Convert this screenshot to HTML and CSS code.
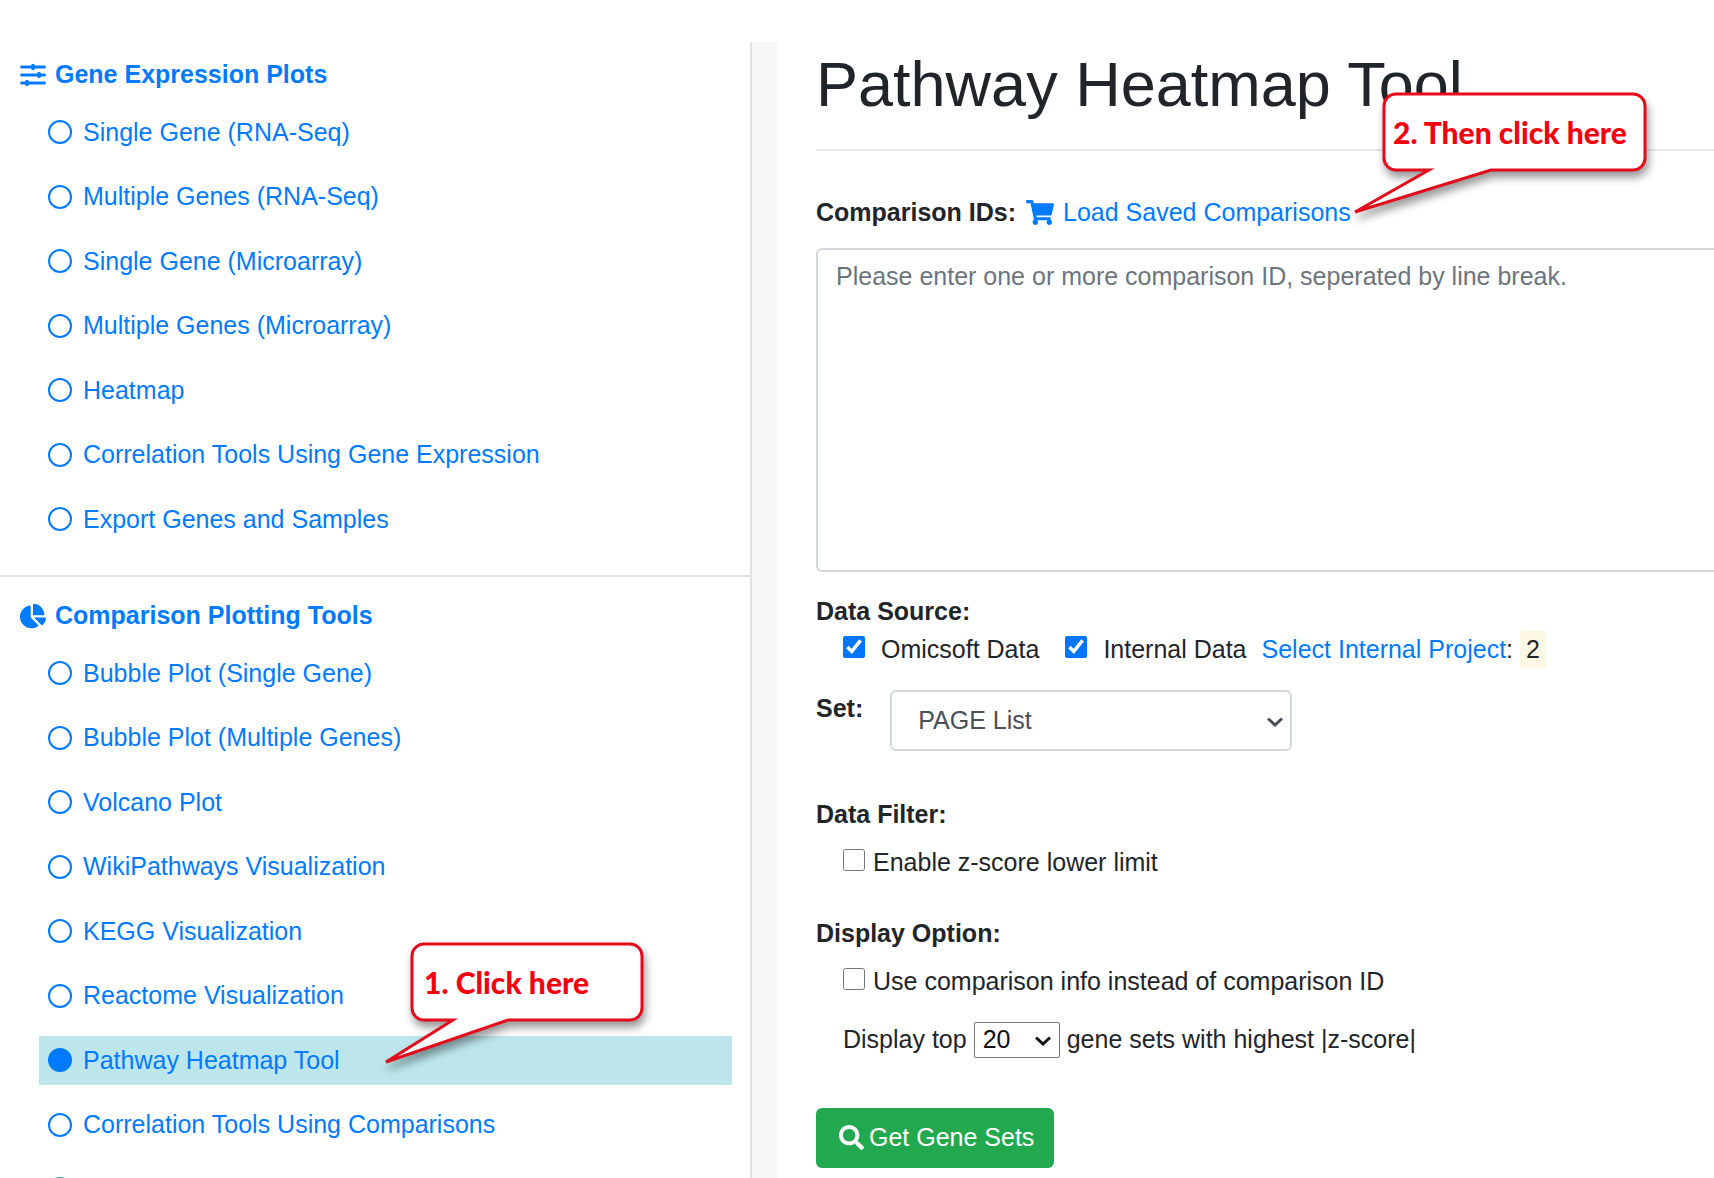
FILE: index.html
```html
<!DOCTYPE html>
<html lang="en">
<head>
<meta charset="utf-8">
<title>Pathway Heatmap Tool</title>
<link rel="stylesheet" href="styles.css">
</head>
<body>
<div class="page">
  <nav class="sidebar">
    <section class="group">
      <h2 class="group-title">
        <svg class="group-icon" viewBox="0 0 26 24" aria-hidden="true"><path d="M1.500 4H24.500M1.500 12H24.500M1.500 20H24.500" stroke="currentColor" stroke-width="2.800" stroke-linecap="round"/><path d="M13 2.500V5.500M19 10.500V13.500M7 18.500V21.500" stroke="currentColor" stroke-width="3.600" stroke-linecap="round"/></svg>
        Gene Expression Plots
      </h2>
      <ul class="tools">
        <li><a class="tool" href="#"><span class="dot"></span>Single Gene (RNA-Seq)</a></li>
        <li><a class="tool" href="#"><span class="dot"></span>Multiple Genes (RNA-Seq)</a></li>
        <li><a class="tool" href="#"><span class="dot"></span>Single Gene (Microarray)</a></li>
        <li><a class="tool" href="#"><span class="dot"></span>Multiple Genes (Microarray)</a></li>
        <li><a class="tool" href="#"><span class="dot"></span>Heatmap</a></li>
        <li><a class="tool" href="#"><span class="dot"></span>Correlation Tools Using Gene Expression</a></li>
        <li><a class="tool" href="#"><span class="dot"></span>Export Genes and Samples</a></li>
      </ul>
    </section>
    <section class="group">
      <h2 class="group-title">
        <svg class="group-icon" viewBox="0 0 544 512" aria-hidden="true"><path fill="currentColor" d="M527.79 288H290.5l158.03 158.03c6.04 6.04 15.98 6.53 22.19.68 38.7-36.46 65.32-85.61 73.13-140.86 1.34-9.46-6.51-17.85-16.06-17.85zm-15.83-64.8C503.72 103.74 408.26 8.28 288.8.04 279.68-.59 272 7.1 272 16.24V240h223.77c9.14 0 16.82-7.68 16.19-16.8zM224 288V50.71c0-9.55-8.39-17.4-17.84-16.06C86.99 51.49-4.1 155.6.14 280.37 4.5 408.51 114.83 513.59 243.03 511.98c50.4-.63 96.97-16.87 135.26-44.03 7.9-5.6 8.42-17.23 1.57-24.08L224 288z"/></svg>
        Comparison Plotting Tools
      </h2>
      <ul class="tools">
        <li><a class="tool" href="#"><span class="dot"></span>Bubble Plot (Single Gene)</a></li>
        <li><a class="tool" href="#"><span class="dot"></span>Bubble Plot (Multiple Genes)</a></li>
        <li><a class="tool" href="#"><span class="dot"></span>Volcano Plot</a></li>
        <li><a class="tool" href="#"><span class="dot"></span>WikiPathways Visualization</a></li>
        <li><a class="tool" href="#"><span class="dot"></span>KEGG Visualization</a></li>
        <li><a class="tool" href="#"><span class="dot"></span>Reactome Visualization</a></li>
        <li class="current">
          <a class="tool tool-active" href="#"><span class="dot"></span>Pathway Heatmap Tool</a>
          <div class="callout callout-first">
            <svg class="bubble" width="262" height="124" viewBox="0 0 262 124" aria-hidden="true"><path d="M40 2H246a12 12 0 0 1 12 12V66a12 12 0 0 1 -12 12H124L2 120L69 78H40a12 12 0 0 1 -12 -12V14a12 12 0 0 1 12 -12z"/></svg>
            <span class="callout-text">1. Click here</span>
          </div>
        </li>
        <li><a class="tool" href="#"><span class="dot"></span>Correlation Tools Using Comparisons</a></li>
        <li><span class="tool tool-next"><span class="dot"></span></span></li>
      </ul>
    </section>
  </nav>

  <main class="content">
    <h1 class="title">Pathway Heatmap Tool</h1>
    <form class="form">
      <div class="ids-row">
        <label class="label" for="ids">Comparison IDs:</label>
        <a class="link load-link" href="#"><svg class="cart" viewBox="0 0 576 512" aria-hidden="true"><path fill="currentColor" d="M528.12 301.319l47.273-208C578.806 78.301 567.391 64 551.99 64H159.208l-9.166-44.81C147.758 8.021 137.93 0 126.529 0H24C10.745 0 0 10.745 0 24v16c0 13.255 10.745 24 24 24h69.883l70.248 343.435C147.325 417.1 136 435.222 136 456c0 30.928 25.072 56 56 56s56-25.072 56-56c0-15.674-6.447-29.835-16.824-40h209.647C430.447 426.165 424 440.326 424 456c0 30.928 25.072 56 56 56s56-25.072 56-56c0-22.172-12.888-41.332-31.579-50.405l5.517-24.276c3.413-15.018-8.002-29.319-23.403-29.319H218.117l-6.545-32h293.145c11.206 0 20.92-7.754 23.403-18.681z"/></svg>Load Saved Comparisons</a>
        <div class="callout callout-second">
          <svg class="bubble" width="296" height="124" viewBox="0 0 296 124" aria-hidden="true"><path d="M43 2H280a12 12 0 0 1 12 12V66a12 12 0 0 1 -12 12H138L2 120L76 78H43a12 12 0 0 1 -12 -12V14a12 12 0 0 1 12 -12z"/></svg>
          <span class="callout-text">2. Then click here</span>
        </div>
      </div>
      <textarea class="ids" id="ids" placeholder="Please enter one or more comparison ID, seperated by line break."></textarea>

      <div class="label source-title">Data Source:</div>
      <div class="source-row">
        <label class="source"><input class="check" type="checkbox" checked>Omicsoft Data</label>
        <label class="source"><input class="check" type="checkbox" checked>Internal Data</label>
        <span class="project"><a class="link" href="#">Select Internal Project</a>: <span class="count">2</span></span>
      </div>

      <div class="set-row">
        <label class="label" for="set">Set:</label>
        <span class="select-wrap">
          <select class="set-select" id="set"><option>PAGE List</option></select>
          <svg class="chevron" viewBox="0 0 16 10" aria-hidden="true"><path d="M1 1.500L8 8L15 1.500"/></svg>
        </span>
      </div>

      <div class="label filter-title">Data Filter:</div>
      <label class="option"><input class="check" type="checkbox">Enable z-score lower limit</label>

      <div class="label display-title">Display Option:</div>
      <label class="option"><input class="check" type="checkbox">Use comparison info instead of comparison ID</label>

      <div class="top-row">
        <label for="top">Display top</label>
        <span class="select-wrap">
          <select class="top-select" id="top"><option>20</option></select>
          <svg class="chevron chevron-dark" viewBox="0 0 16 10" aria-hidden="true"><path d="M1 1.500L8 8L15 1.500"/></svg>
        </span>
        <span>gene sets with highest |z-score|</span>
      </div>

      <button class="submit" type="button"><svg class="search" viewBox="0 0 512 512" aria-hidden="true"><path fill="currentColor" d="M505 442.7L405.3 343c-4.5-4.5-10.6-7-17-7H372c27.6-35.3 44-79.7 44-128C416 93.1 322.9 0 208 0S0 93.1 0 208s93.1 208 208 208c48.3 0 92.7-16.4 128-44v16.3c0 6.4 2.5 12.5 7 17l99.7 99.7c9.4 9.4 24.6 9.4 33.9 0l28.3-28.3c9.4-9.4 9.4-24.6.1-34zM208 336c-70.7 0-128-57.2-128-128 0-70.7 57.2-128 128-128 70.7 0 128 57.2 128 128 0 70.7-57.2 128-128 128z"/></svg>Get Gene Sets</button>
    </form>
  </main>
</div>
</body>
</html>
```
FILE: styles.css
```css
* {
  box-sizing: border-box;
}

body {
  margin: 0;
  background: #fff;
  color: #212529;
  font-family: "Liberation Sans", Arial, sans-serif;
  font-size: 25px;
  line-height: 1.5;
}

.page {
  display: flex;
  height: 100vh;
  padding-top: 42px;
  overflow: hidden;
}

/* Sidebar */
.sidebar {
  flex: 0 0 752px;
  border-right: 2px solid #e0e1e2;
}

.group {
  padding: 14px 18px 31px 20px;
}

.group + .group {
  padding-top: 20px;
  border-top: 2px solid #dee0e2;
}

.group-title {
  display: flex;
  align-items: center;
  gap: 9px;
  margin: 0 0 14px;
  color: #007bff;
  font-size: 25px;
  font-weight: 700;
}

.group-icon {
  width: 26px;
  height: 26px;
}

.tools {
  display: flex;
  flex-direction: column;
  gap: 15px;
  margin: 0;
  padding: 0 0 0 19px;
  list-style: none;
}

.tool {
  display: flex;
  align-items: center;
  gap: 11px;
  padding: 6px 9px;
  color: #007bff;
  text-decoration: none;
}

.tool-active {
  background: #bce6eb;
}

.dot {
  width: 24px;
  height: 24px;
  border: 2px solid #007bff;
  border-radius: 50%;
}

.tool-active .dot {
  background: #007bff;
}

.tool-next {
  padding: 12px 9px;
}

.tool-next .dot {
  border-color: #1f9bb0;
}

.current {
  position: relative;
}

/* Main column */
.content {
  flex: 1;
  min-width: 0;
  padding: 5px 0 0 39px;
  border-left: 25px solid #f6f6f6;
}

.title {
  margin: 0;
  padding-bottom: 26px;
  border-bottom: 2px solid #e8e8e9;
  font-size: 63px;
  font-weight: 400;
  line-height: 1.2;
}

.form {
  padding-top: 43px;
}

.label {
  font-weight: 700;
}

.link {
  color: #007bff;
  text-decoration: none;
}

.ids-row {
  position: relative;
  display: flex;
  align-items: center;
  gap: 10px;
}

.load-link {
  display: flex;
  align-items: center;
  gap: 9px;
}

.cart {
  width: 28px;
  height: 25px;
}

.ids {
  display: block;
  width: 100%;
  height: 324px;
  margin-top: 17px;
  padding: 8px 18px;
  border: 2px solid #d3d8dd;
  border-right: 0;
  border-radius: 6px 0 0 6px;
  outline: 0;
  resize: none;
  font: inherit;
}

.ids::placeholder {
  color: #6c757d;
}

.source-title {
  margin-top: 21px;
}

.source-row {
  display: flex;
  align-items: baseline;
  padding-left: 27px;
}

.source {
  display: flex;
  align-items: baseline;
  gap: 16px;
  margin-right: 26px;
}

.source + .source {
  margin-right: 15px;
}

.check {
  width: 22px;
  height: 22px;
  margin: 0 0 1px;
  accent-color: #0075ff;
}

.count {
  display: inline-block;
  padding: 0 6px;
  background: #fcf8e3;
}

.set-row {
  display: flex;
  align-items: flex-start;
  gap: 27px;
  margin-top: 22px;
}

.select-wrap {
  position: relative;
  display: flex;
}

.set-select,
.top-select {
  appearance: none;
  background: #fff;
  font: inherit;
}

.set-select {
  width: 402px;
  height: 61px;
  padding: 0 26px;
  border: 2px solid #d3d8dd;
  border-radius: 6px;
  color: #495057;
}

.top-select {
  width: 86px;
  height: 36px;
  padding: 0 8px;
  border: 1px solid #767676;
  border-radius: 2px;
  color: #111;
  line-height: 1;
}

.chevron {
  position: absolute;
  top: 50%;
  right: 9px;
  width: 16px;
  height: 10px;
  margin-top: -4px;
  fill: none;
  stroke: #495057;
  stroke-width: 3;
  pointer-events: none;
}

.chevron-dark {
  stroke: #111;
}

.filter-title {
  margin-top: 45px;
}

.option {
  display: flex;
  align-items: baseline;
  gap: 8px;
  margin-top: 10px;
  padding-left: 27px;
}

.display-title {
  margin-top: 34px;
}

.top-row {
  display: flex;
  align-items: center;
  gap: 7px;
  margin-top: 21px;
  padding-left: 27px;
}

.submit {
  display: flex;
  align-items: center;
  gap: 5px;
  height: 60px;
  margin-top: 49px;
  padding: 0 20px 0 23px;
  border: 0;
  border-radius: 6px;
  background: #22a84e;
  color: #fff;
  font: inherit;
}

.search {
  width: 25px;
  height: 25px;
}

/* Speech bubbles laid over the page */
.callout {
  position: absolute;
  z-index: 1;
  color: #f5000f;
  font-family: Lato, sans-serif;
  font-size: 30px;
  font-weight: 900;
  line-height: 40px;
  white-space: nowrap;
}

.callout-first {
  top: -94px;
  left: 345px;
}

.callout-second {
  top: -102px;
  left: 537px;
}

.bubble {
  display: block;
  overflow: visible;
  fill: #fff;
  stroke: #e30b1c;
  stroke-width: 3;
  filter: drop-shadow(2px 6px 4px rgba(0, 0, 0, 0.4));
}

.callout-text {
  position: absolute;
  top: 20px;
  left: 40px;
}
```
